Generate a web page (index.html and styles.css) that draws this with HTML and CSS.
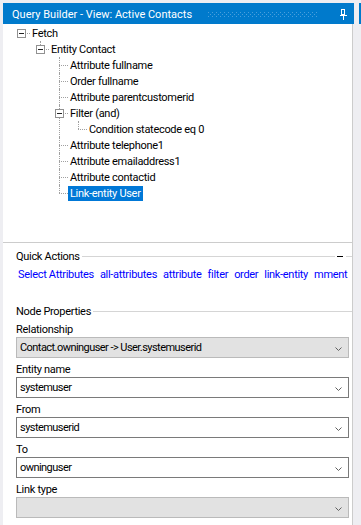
FILE: index.html
```html
<!DOCTYPE html>
<html lang="en">
<head>
    <meta charset="UTF-8">
    <title>Query Builder</title>
    <link rel="stylesheet" href="styles.css">
</head>
<body>
    <div class="desk">
        <div class="window">
            <div class="titlebar">
                <span class="title-text">Query Builder - View: Active Contacts</span>
                <svg class="grip" width="110" height="5" viewBox="0 0 110 5">
                    <defs>
                        <pattern id="dots" width="4" height="4" patternUnits="userSpaceOnUse">
                            <rect x="0" y="0" width="1" height="1" fill="#4a9fdc"/>
                            <rect x="2" y="2" width="1" height="1" fill="#4a9fdc"/>
                        </pattern>
                    </defs>
                    <rect width="110" height="5" fill="url(#dots)"/>
                </svg>
                <svg class="pin" width="7" height="11" viewBox="0 0 7 11">
                    <rect x="1.5" y="0.5" width="3" height="5" fill="none" stroke="#fff"/>
                    <rect x="4" y="0" width="1" height="6" fill="#fff"/>
                    <rect x="0" y="6" width="7" height="1" fill="#fff"/>
                    <rect x="3" y="7" width="1" height="4" fill="#fff"/>
                </svg>
            </div>

            <div class="content">
                <div class="tree-panel">
                    <ul class="tree">
                        <li class="root">
                            <div class="row"><span class="exp"></span><span class="label">Fetch</span></div>
                            <ul>
                                <li>
                                    <div class="row"><span class="exp"></span><span class="label">Entity Contact</span></div>
                                    <ul>
                                        <li><div class="row"><span class="label">Attribute fullname</span></div></li>
                                        <li><div class="row"><span class="label">Order fullname</span></div></li>
                                        <li><div class="row"><span class="label">Attribute parentcustomerid</span></div></li>
                                        <li>
                                            <div class="row"><span class="exp"></span><span class="label">Filter (and)</span></div>
                                            <ul>
                                                <li><div class="row"><span class="label">Condition statecode eq 0</span></div></li>
                                            </ul>
                                        </li>
                                        <li><div class="row"><span class="label">Attribute telephone1</span></div></li>
                                        <li><div class="row"><span class="label">Attribute emailaddress1</span></div></li>
                                        <li><div class="row"><span class="label">Attribute contactid</span></div></li>
                                        <li><div class="row"><span class="label selected">Link-entity User</span></div></li>
                                    </ul>
                                </li>
                            </ul>
                        </li>
                    </ul>
                </div>

                <div class="quick">
                    <div class="group-head">
                        <span>Quick Actions</span>
                        <span class="group-line"></span>
                        <span class="collapse"></span>
                        <span class="group-line tail"></span>
                    </div>
                    <div class="links">
                        <a href="#">Select Attributes</a>
                        <a href="#">all-attributes</a>
                        <a href="#">attribute</a>
                        <a href="#">filter</a>
                        <a href="#">order</a>
                        <a href="#">link-entity</a>
                        <a href="#">mment</a>
                    </div>
                </div>

                <div class="props">
                    <div class="group-head">
                        <span>Node Properties</span>
                        <span class="group-line"></span>
                    </div>

                    <div class="field-label">Relationship</div>
                    <div class="combo disabled">
                        <span>Contact.owninguser -&gt; User.systemuserid</span>
                        <svg class="chev" width="7" height="4" viewBox="0 0 7 4"><polyline points="0.5,0.5 3.5,3.5 6.5,0.5" fill="none" stroke="#606060"/></svg>
                    </div>

                    <div class="field-label">Entity name</div>
                    <div class="combo">
                        <span>systemuser</span>
                        <svg class="chev" width="7" height="4" viewBox="0 0 7 4"><polyline points="0.5,0.5 3.5,3.5 6.5,0.5" fill="none" stroke="#606060"/></svg>
                    </div>

                    <div class="field-label">From</div>
                    <div class="combo">
                        <span>systemuserid</span>
                        <svg class="chev" width="7" height="4" viewBox="0 0 7 4"><polyline points="0.5,0.5 3.5,3.5 6.5,0.5" fill="none" stroke="#606060"/></svg>
                    </div>

                    <div class="field-label">To</div>
                    <div class="combo">
                        <span>owninguser</span>
                        <svg class="chev" width="7" height="4" viewBox="0 0 7 4"><polyline points="0.5,0.5 3.5,3.5 6.5,0.5" fill="none" stroke="#606060"/></svg>
                    </div>

                    <div class="field-label">Link type</div>
                    <div class="combo disabled">
                        <span></span>
                        <svg class="chev" width="7" height="4" viewBox="0 0 7 4"><polyline points="0.5,0.5 3.5,3.5 6.5,0.5" fill="none" stroke="#606060"/></svg>
                    </div>
                </div>
            </div>
        </div>
        <div class="neighbor"></div>
    </div>
</body>
</html>
```

FILE: styles.css
```css
html, body {
    margin: 0;
    padding: 0;
    height: 100%;
    overflow: hidden;
}

body {
    font-family: Roboto, "Liberation Sans", sans-serif;
    font-size: 11px;
    color: #000;
    background: #eeeef2;
}

.desk {
    display: flex;
    padding: 3px 0 0 3px;
    height: 100%;
    box-sizing: border-box;
}

.window {
    width: 351px;
    display: flex;
    flex-direction: column;
}

.neighbor {
    margin-left: 5px;
    width: 2px;
    height: 21px;
    background: #007acc;
}

/* Barre de titre */
.titlebar {
    height: 21px;
    background: #007acc;
    color: #fff;
    display: flex;
    align-items: center;
    padding: 0 7px 0 9px;
}

.title-text {
    line-height: 14px;
    margin-top: 3px;
    white-space: nowrap;
}

.grip {
    margin-left: 16px;
    margin-top: 2px;
    display: block;
}

.pin {
    margin-left: auto;
    display: block;
    margin-top: 1px;
}

.content {
    flex: 1;
    width: 349px;
    background: #fff;
    border-right: 1px solid #cccccc;
    letter-spacing: -0.3px;
}

/* Arbre */
.tree-panel {
    height: 218px;
    border-bottom: 1px solid #cccccc;
}

.tree, .tree ul {
    list-style: none;
    margin: 0;
    padding: 0;
}

.tree {
    padding: 1px 0 0 18px;
}

.tree ul {
    margin-left: 19px;
}

.tree li {
    position: relative;
}

.tree li::before {
    content: "";
    position: absolute;
    left: 0;
    top: 0;
    bottom: 0;
    border-left: 1px dotted #a0a0a0;
}

.tree li:last-child::before {
    bottom: auto;
    height: 8px;
}

.tree li.root::before {
    display: none;
}

.row {
    position: relative;
    height: 16px;
    display: flex;
    align-items: flex-start;
    padding-left: 9px;
}

.row::before {
    content: "";
    position: absolute;
    left: 0;
    top: 8px;
    width: 9px;
    border-top: 1px dotted #a0a0a0;
}

.exp {
    position: absolute;
    left: -4px;
    top: 4px;
    width: 9px;
    height: 9px;
    box-sizing: border-box;
    border: 1px solid #919191;
    background: #fff;
    z-index: 1;
}

.exp::after {
    content: "";
    position: absolute;
    left: 1px;
    top: 3px;
    width: 5px;
    height: 1px;
    background: #222;
}

.label {
    margin-top: 1px;
    line-height: 15px;
    height: 15px;
    padding: 0 2px;
    white-space: nowrap;
}

.label.selected {
    background: #0078d7;
    color: #fff;
}

/* Groupes */
.quick {
    padding: 7px 0 0 13px;
}

.group-head {
    display: flex;
    line-height: 13px;
    height: 13px;
}

.group-line {
    flex: 1;
    height: 1px;
    margin: 6px 0 0 2px;
    background: #d5d5d5;
}

.group-line.tail {
    flex: none;
    width: 6px;
    margin-left: 0;
}

.collapse {
    width: 6px;
    height: 1px;
    margin: 6px 3px 0 2px;
    background: #000;
}

.links {
    display: flex;
    gap: 6px;
    margin-top: 5px;
    padding-left: 2px;
    line-height: 14px;
    white-space: nowrap;
    overflow: hidden;
}

.links a {
    color: #0000ff;
    text-decoration: none;
}

.props {
    padding: 23px 3px 0 13px;
}

.props .group-head {
    margin-right: -3px;
}

.field-label {
    padding-top: 5px;
    line-height: 14px;
}

.combo {
    height: 21px;
    box-sizing: border-box;
    border: 1px solid #7a7a7a;
    background: #fff;
    display: flex;
    align-items: center;
    justify-content: space-between;
    padding: 0 6px 0 3px;
    white-space: nowrap;
    letter-spacing: -0.55px;
}

.combo.disabled {
    background: #e2e2e2;
    border-color: #bababa;
}

.chev {
    display: block;
    margin-top: 2px;
}
```
